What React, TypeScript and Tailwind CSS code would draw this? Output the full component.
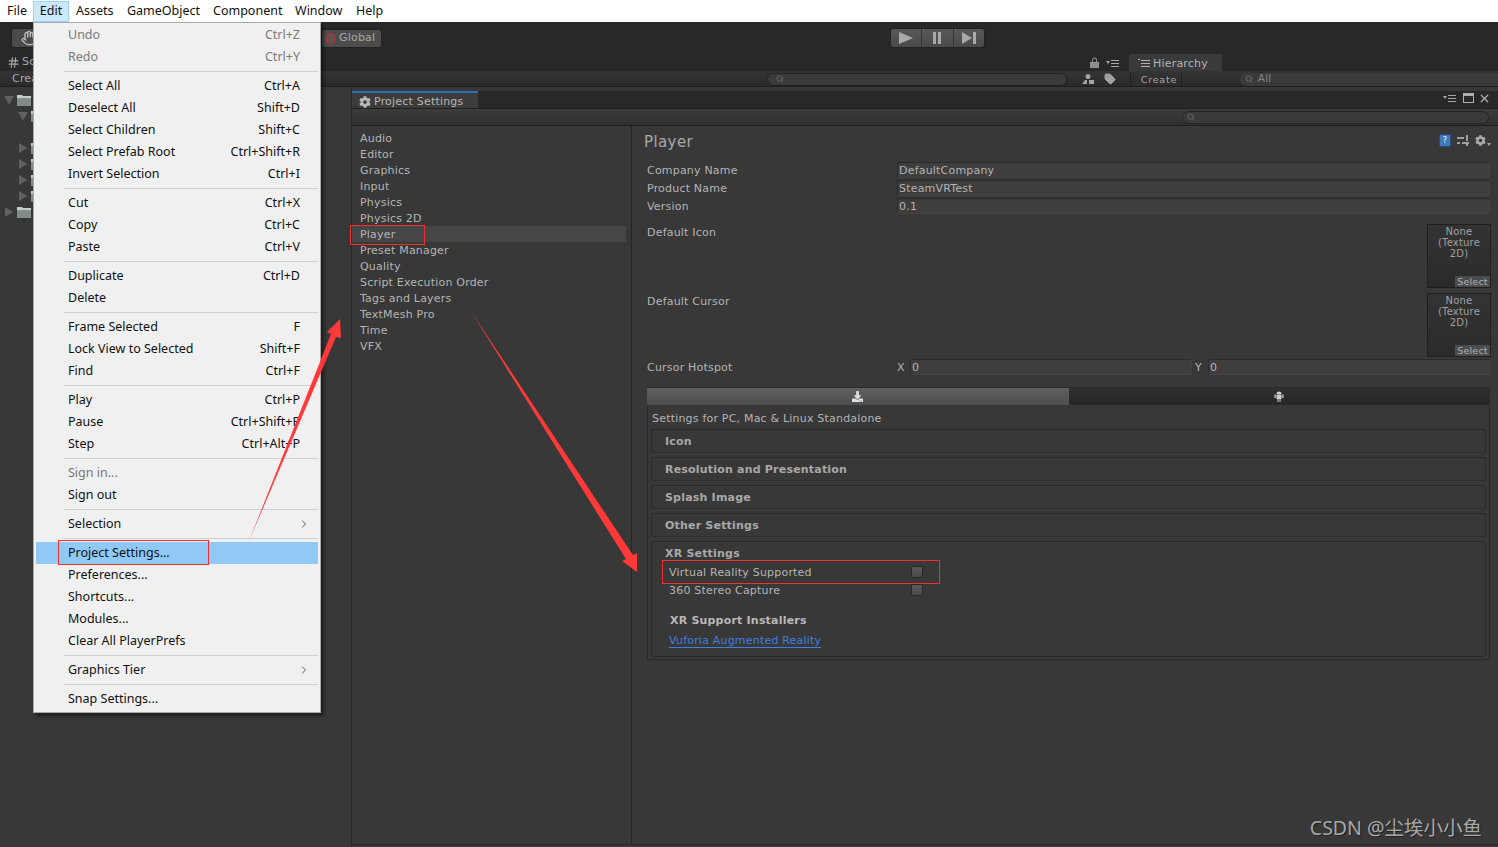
import { Hand, Hash, Search, Tag, X, ChevronRight } from 'lucide-react';
import { FaCog, FaDownload } from 'react-icons/fa';

const UNITY_FONT = 'font-["DejaVu_Sans",sans-serif] text-[11px] tracking-[0.2px]';

type MenuEntry =
  | { sep: true }
  | { sep?: false; label: string; keys?: string; disabled?: boolean; arrow?: boolean; active?: boolean };

const MENU: MenuEntry[] = [
  { label: 'Undo', keys: 'Ctrl+Z', disabled: true },
  { label: 'Redo', keys: 'Ctrl+Y', disabled: true },
  { sep: true },
  { label: 'Select All', keys: 'Ctrl+A' },
  { label: 'Deselect All', keys: 'Shift+D' },
  { label: 'Select Children', keys: 'Shift+C' },
  { label: 'Select Prefab Root', keys: 'Ctrl+Shift+R' },
  { label: 'Invert Selection', keys: 'Ctrl+I' },
  { sep: true },
  { label: 'Cut', keys: 'Ctrl+X' },
  { label: 'Copy', keys: 'Ctrl+C' },
  { label: 'Paste', keys: 'Ctrl+V' },
  { sep: true },
  { label: 'Duplicate', keys: 'Ctrl+D' },
  { label: 'Delete' },
  { sep: true },
  { label: 'Frame Selected', keys: 'F' },
  { label: 'Lock View to Selected', keys: 'Shift+F' },
  { label: 'Find', keys: 'Ctrl+F' },
  { sep: true },
  { label: 'Play', keys: 'Ctrl+P' },
  { label: 'Pause', keys: 'Ctrl+Shift+P' },
  { label: 'Step', keys: 'Ctrl+Alt+P' },
  { sep: true },
  { label: 'Sign in...', disabled: true },
  { label: 'Sign out' },
  { sep: true },
  { label: 'Selection', arrow: true },
  { sep: true },
  { label: 'Project Settings...', active: true },
  { label: 'Preferences...' },
  { label: 'Shortcuts...' },
  { label: 'Modules...' },
  { label: 'Clear All PlayerPrefs' },
  { sep: true },
  { label: 'Graphics Tier', arrow: true },
  { sep: true },
  { label: 'Snap Settings...' },
];

const SETTINGS_LIST = [
  'Audio', 'Editor', 'Graphics', 'Input', 'Physics', 'Physics 2D', 'Player', 'Preset Manager',
  'Quality', 'Script Execution Order', 'Tags and Layers', 'TextMesh Pro', 'Time', 'VFX',
];

function Tri({ dir }: { dir: 'down' | 'right' }) {
  return (
    <svg width="10" height="10" viewBox="0 0 10 10">
      <path d={dir === 'down' ? 'M0 1h10L5 9.500z' : 'M1 0v10l8-5z'} fill="#626262" />
    </svg>
  );
}

function Folder() {
  return (
    <svg width="14" height="12" viewBox="0 0 14 12">
      <path d="M0 1h5l1 1h8v10H0z" fill="#c4cccc" />
      <path d="M0 4h14v8H0z" fill="#808a8a" />
    </svg>
  );
}

function TreeRow({ dir, indent }: { dir: 'down' | 'right'; indent?: boolean }) {
  return (
    <div className={`flex h-4 items-center gap-[3px] ${indent ? 'pl-[18px]' : 'pl-1'}`}>
      <Tri dir={dir} />
      <Folder />
    </div>
  );
}

function EditMenu() {
  return (
    <div className='absolute left-[33px] top-[22px] z-10 h-[691px] w-[288px] border border-[#a8a8a8] bg-[#f0f0f0] px-[2px] pt-[1px] font-["Noto_Sans",sans-serif] text-[12.5px] leading-[22px] text-[#111] shadow-[3px_3px_3px_rgba(0,0,0,0.45)]'>
      {MENU.map((m, i) =>
        m.sep ? (
          <div key={i} className="flex h-[7px] items-center pl-[28px]">
            <div className="h-px w-full bg-[#d0d0d0]" />
          </div>
        ) : (
          <div
            key={i}
            className={`flex h-[22px] items-center justify-between pl-[32px] pr-[18px] ${m.active ? 'bg-[#90c8f6]' : ''} ${m.disabled ? 'text-[#7a7a7a]' : ''}`}
          >
            <span>{m.label}</span>
            {m.keys && <span>{m.keys}</span>}
            {m.arrow && <ChevronRight size={12} strokeWidth={1.6} className="-mr-[10px] text-[#333]" />}
          </div>
        ),
      )}
    </div>
  );
}

function Field({ children, className = '' }: { children?: string; className?: string }) {
  return (
    <div className={`h-[16px] rounded-[2px] border border-[#2b2b2b] border-b-[#444] border-r-[#444] bg-[#3e3e3e] pl-[1px] leading-[16px] text-[#b4b4b4] ${className}`}>
      {children}
    </div>
  );
}

function TextureSlot() {
  return (
    <div className="absolute right-[-1px] top-0 h-[64px] w-[64px] border border-[#1f1f1f] bg-gradient-to-b from-[#333] to-[#2b2b2b] pt-[1px] text-center text-[10px] leading-[11px] text-[#a0a0a0]">
      None
      <br />
      (Texture
      <br />
      2D)
      <div className="absolute bottom-0 right-0 h-[11px] w-[35px] bg-[#4c4c4c] text-[9.5px] leading-[11px] text-[#b0b0b0]">Select</div>
    </div>
  );
}

function Foldout({ title }: { title: string }) {
  return (
    <div className="h-[24px] rounded-[3px] border border-[#292929] border-b-[#2e2e2e] pl-[13px] font-bold leading-[24px] text-[#a8a8a8]">
      {title}
    </div>
  );
}

function Checkbox() {
  return <span className="h-[12px] w-[12px] rounded-[2px] border border-[#282828] bg-gradient-to-b from-[#5a5a5a] to-[#4a4a4a]" />;
}

function PlayButtons() {
  return (
    <div className="flex h-[20px] w-[95px] divide-x divide-[#333] rounded-[3px] border border-[#222] bg-gradient-to-b from-[#585858] to-[#4a4a4a]">
      <div className="flex flex-1 items-center justify-center">
        <svg width="16" height="14" viewBox="0 0 16 14"><path d="M1 1l14 6-14 6z" fill="#a9a9a9" /></svg>
      </div>
      <div className="flex flex-1 items-center justify-center">
        <svg width="12" height="14" viewBox="0 0 12 14"><path d="M2 1h3v12H2zM7 1h3v12H7z" fill="#a9a9a9" /></svg>
      </div>
      <div className="flex flex-1 items-center justify-center">
        <svg width="16" height="14" viewBox="0 0 16 14"><path d="M1 1l10 6-10 6zM12 1h3v12h-3z" fill="#a9a9a9" /></svg>
      </div>
    </div>
  );
}

function ListMenuIcon({ className }: { className?: string }) {
  return (
    <svg width="14" height="8" viewBox="0 0 14 8" className={className}>
      <path d="M0 2h4L2 5zM5 1h8v1H5zM5 4h8v1H5zM5 7h8v1H5z" fill="#a8a8a8" />
    </svg>
  );
}

function WindowButtons() {
  return (
    <div className="flex items-center gap-[6px] pb-[3px] text-[#b0b0b0]">
      <ListMenuIcon />
      <div className="h-[10px] w-[11px] border border-[#b0b0b0] border-t-[3px]" />
      <X size={13} strokeWidth={2.2} className="-ml-[2px]" />
    </div>
  );
}

function Annotations() {
  return (
    <svg width="1498" height="847" viewBox="0 0 1498 847" className="pointer-events-none absolute left-0 top-0 z-20">
      <path d="M249 541L331 334L327 332L340 319L341 338L336 337z" fill="#ff3838" />
      <path d="M470 310L633 555L637 553L637 572L622 561L626 559z" fill="#ff3838" />
    </svg>
  );
}

function RedBox({ className }: { className: string }) {
  return <div className={`pointer-events-none absolute z-20 border border-[#f03030] ${className}`} />;
}

export default function App() {
  return (
    <div className="relative flex h-[847px] w-[1498px] flex-col overflow-hidden bg-[#383838]">
      {/* menu bar */}
      <div className='flex h-[22px] items-center bg-white pl-[7px] font-["Noto_Sans",sans-serif] text-[12.5px] text-[#111]'>
        <span className="w-[26px] pt-[1px]">File</span>
        <span className="mr-[7px] flex h-[21px] w-[36px] items-center justify-center border border-[#99d1ff] bg-[#cce8ff] pt-[1px]">Edit</span>
        <span className="w-[51px] pt-[1px]">Assets</span>
        <span className="w-[86px] pt-[1px]">GameObject</span>
        <span className="w-[82px] pt-[1px]">Component</span>
        <span className="w-[61px] pt-[1px]">Window</span>
        <span className="pt-[1px]">Help</span>
      </div>

      {/* toolbar */}
      <div className={`flex h-[30px] items-center bg-[#282828] pl-[11px] pt-[2px] ${UNITY_FONT}`}>
        <div className="flex h-[20px] w-[30px] items-center justify-center rounded-[3px] border border-[#222] bg-[#4a4a4a]">
          <Hand size={16} className="ml-[6px] text-[#c0c0c0]" />
        </div>
        <div className="ml-[280px] flex h-[19px] w-[61px] items-center gap-[3px] rounded-[3px] border border-[#222] bg-[#4c4c4c] pl-[3px] text-[#a8a8a8]">
          <span className="h-[11px] w-[11px] rounded-full border-2 border-[#9a3a3a] bg-[#555]" />
          Global
        </div>
        <div className="ml-[508px]">
          <PlayButtons />
        </div>
      </div>

      {/* tab row */}
      <div className={`flex h-[19px] items-end bg-[#282828] ${UNITY_FONT}`}>
        <div className="flex h-[18px] items-center gap-[2px] pl-[7px] text-[#a8a8a8]">
          <Hash size={13} />
          <span>Scene</span>
        </div>
        <div className="ml-auto flex items-center gap-[7px] pb-[3px]">
          <svg width="9" height="11" viewBox="0 0 9 11"><path d="M2 5V3a2.500 2.500 0 0 1 5 0v2H6V3a1.500 1.500 0 0 0-3 0v2zM0 5h9v6H0z" fill="#8e8e8e" /></svg>
          <ListMenuIcon className="mr-[9px]" />
        </div>
        <div className="mr-[276px] flex h-[17px] w-[93px] items-center gap-[3px] rounded-t-[2px] bg-[#3a3a3a] pl-[9px] pt-[3px] text-[#b4b4b4]">
          <svg width="12" height="9" viewBox="0 0 12 9" className="-mt-[2px]"><path d="M0 0h2v1H0zM3 1h9v1H3zM3 4h9v1H3zM3 7h9v1H3z" fill="#b4b4b4" /></svg>
          Hierarchy
        </div>
      </div>

      {/* search row */}
      <div className={`flex h-[16px] items-center border-b border-[#1d1d1d] bg-gradient-to-b from-[#343434] to-[#2a2a2a] pt-[1px] ${UNITY_FONT} text-[10px]`}>
        <div className="ml-[12px] text-[#a8a8a8]">Create</div>
        <div className="ml-[717px] flex h-[13px] w-[300px] items-center rounded-full border border-[#222] bg-[#3a3a3a] pl-[8px]">
          <Search size={8} className="text-[#777]" />
        </div>
        <div className="ml-[14px] flex items-center gap-[9px] text-[#999]">
          <svg width="14" height="12" viewBox="0 0 14 12"><path d="M7 1a2.500 2.500 0 1 1 0 5 2.500 2.500 0 0 1 0-5zM1 11l3-4h2v4zM8 7h5v4H8z" fill="#a2a2a2" /></svg>
          <Tag size={12} fill="#a2a2a2" />
        </div>
        <div className="ml-[14px] h-full w-[52px] border-l border-r border-[#1f1f1f] pl-[10px] text-[9.5px] leading-[15px] tracking-[0.8px] text-[#a8a8a8]">Create ▾</div>
        <div className="ml-[58px] flex h-[13px] flex-1 items-center rounded-l-full bg-[#3a3a3a] pl-[5px] text-[#868686]">
          <Search size={8} />
          <span className="ml-[2px] pl-[3px] text-[10.5px]">All</span>
        </div>
      </div>

      {/* workspace */}
      <div className="flex min-h-0 flex-1">
        <aside className="flex w-[352px] flex-col border-r border-[#262626] bg-[#383838] pt-[5px]">
          <TreeRow dir="down" />
          <TreeRow dir="down" indent />
          <div className="h-[16px]" />
          <TreeRow dir="right" indent />
          <TreeRow dir="right" indent />
          <TreeRow dir="right" indent />
          <TreeRow dir="right" indent />
          <TreeRow dir="right" />
        </aside>

        <section className={`flex min-w-0 flex-1 flex-col pt-[4px] ${UNITY_FONT}`}>
          {/* window tabs */}
          <div className="flex h-[17px] items-stretch justify-between bg-[#282828] pr-[7px]">
            <div className="flex w-[126px] items-center gap-[3px] border-t-2 border-[#2f6fb8] bg-[#3c3c3c] pl-[7px] pt-[3px] text-[#b4b4b4]">
              <FaCog size={12} className="-mt-[1px] text-[#b8b8b8]" />
              Project Settings
            </div>
            <WindowButtons />
          </div>
          {/* window toolbar */}
          <div className="flex h-[18px] items-center justify-end border-y border-[#1f1f1f] bg-gradient-to-b from-[#3c3c3c] to-[#2f2f2f] pr-[9px]">
            <div className="flex h-[13px] w-[307px] items-center rounded-full border border-[#242424] bg-[#3a3a3a] pl-[4px]">
              <Search size={8} className="text-[#7a7a7a]" />
            </div>
          </div>

          <div className="flex min-h-0 flex-1">
            {/* settings list */}
            <div className="w-[280px] border-r border-[#242424] pr-[5px] pt-[4px] leading-[18px] text-[#b4b4b4]">
              {SETTINGS_LIST.map((s) => (
                <div key={s} className={`h-[16px] pl-[8px] ${s === 'Player' ? 'bg-[#464646]' : ''}`}>{s}</div>
              ))}
            </div>

            {/* player settings */}
            <div className="min-w-0 flex-1 pl-[15px] pr-[8px] text-[#b4b4b4]">
              <div className="-ml-[3px] flex h-[30px] items-center justify-between">
                <span className="pt-[2px] text-[15px] tracking-[0.4px] text-[#a8a8a8]">Player</span>
                <div className="-mr-[1px] flex items-center gap-[6px] pb-[2px]">
                  <div className="h-[13px] w-[12px] rounded-[1px] border border-[#2a4a78] bg-[#3f78bb] text-center text-[8px] leading-[11px] text-white">?</div>
                  <svg width="12" height="12" viewBox="0 0 12 12"><path d="M0 3h7v2H0zM0 8h3v2H0zM5 8h7v2H5zM9 1h2v6H9zM9 10h2v2H9z" fill="#a0a0a0" /></svg>
                  <div className="flex items-end">
                    <FaCog size={11} className="text-[#a8a8a8]" />
                    <span className="ml-[1px] h-0 w-0 border-x-[2px] border-t-[3px] border-x-transparent border-t-[#a8a8a8]" />
                  </div>
                </div>
              </div>

              <div className="flex flex-col gap-[2px] pt-[6px]">
                {[
                  ['Company Name', 'DefaultCompany'],
                  ['Product Name', 'SteamVRTest'],
                  ['Version', '0.1'],
                ].map(([name, value]) => (
                  <div key={name} className="flex h-[16px] items-center">
                    <span className="w-[250px] pt-[2px]">{name}</span>
                    <Field className="flex-1">{value}</Field>
                  </div>
                ))}
              </div>

              <div className="relative mt-[10px] h-[64px] pt-[1px]">
                <span>Default Icon</span>
                <TextureSlot />
              </div>
              <div className="relative mt-[5px] h-[64px] pt-[1px]">
                <span>Default Cursor</span>
                <TextureSlot />
              </div>

              <div className="mt-[2px] flex h-[16px] items-center">
                <span className="w-[250px] pt-[2px]">Cursor Hotspot</span>
                <span className="w-[13px] pt-[2px]">X</span>
                <Field className="w-[282px]">0</Field>
                <span className="ml-[3px] w-[13px] pt-[2px]">Y</span>
                <Field className="flex-1">0</Field>
              </div>

              {/* platform tabs */}
              <div className="mt-[12px] flex h-[18px] border-t border-[#2b2b2b]">
                <div className="flex flex-1 items-center justify-center bg-gradient-to-b from-[#606060] to-[#4e4e4e] text-[#e0e0e0]">
                  <FaDownload size={11} />
                </div>
                <div className="flex flex-1 items-center justify-center bg-gradient-to-b from-[#2f2f2f] to-[#272727]">
                  <svg width="10" height="11" viewBox="0 0 10 11">
                    <path d="M2.500 3a2.500 2.500 0 0 1 5 0zM2.500 3.500h5V8h-1v3h-1V8h-1v3h-1V8h-1zM0.500 3.500h1.200V7H0.500zM8.300 3.500h1.200V7H8.300z" fill="#d0d0d0" />
                  </svg>
                </div>
              </div>

              <div className="h-[255px] border-x border-b border-[#2a2a2a] px-[3px]">
                <div className="h-[24px] pl-[1px] leading-[28px]">Settings for PC, Mac &amp; Linux Standalone</div>
                <div className="flex flex-col gap-[4px]">
                  <Foldout title="Icon" />
                  <Foldout title="Resolution and Presentation" />
                  <Foldout title="Splash Image" />
                  <Foldout title="Other Settings" />
                  <div className="h-[116px] rounded-[3px] border border-[#292929] pl-[13px]">
                    <div className="h-[21px] font-bold leading-[24px] text-[#a8a8a8]">XR Settings</div>
                    <div className="flex h-[18px] items-center pl-[4px]">
                      <span className="w-[242px] pt-[2px]">Virtual Reality Supported</span>
                      <Checkbox />
                    </div>
                    <div className="flex h-[18px] items-center pl-[4px]">
                      <span className="w-[242px] pt-[2px]">360 Stereo Capture</span>
                      <Checkbox />
                    </div>
                    <div className="mt-[14px] pl-[5px] font-bold leading-[16px] text-[#b8b8b8]">XR Support Installers</div>
                    <div className="mt-[4px] pl-[4px] leading-[16px]">
                      <span className="border-b border-[#3f7fe0] text-[#3f7fe0]">Vuforia Augmented Reality</span>
                    </div>
                  </div>
                </div>
              </div>
            </div>
          </div>
          <div className="h-[3px] border-t border-[#2a2a2a]" />
        </section>
      </div>

      <EditMenu />
      <RedBox className="left-[58px] top-[540px] h-[25px] w-[151px]" />
      <RedBox className="left-[350px] top-[225px] h-[20px] w-[75px]" />
      <RedBox className="left-[662px] top-[560px] h-[24px] w-[278px]" />
      <Annotations />
      <div className='absolute bottom-[5px] right-[16px] z-20 font-["Noto_Sans","Noto_Sans_CJK_SC",sans-serif] text-[19.5px] leading-[28px] text-[#a8a8a8] [text-shadow:1px_1px_0_#222]'>CSDN @尘埃小小鱼</div>
    </div>
  );
}
